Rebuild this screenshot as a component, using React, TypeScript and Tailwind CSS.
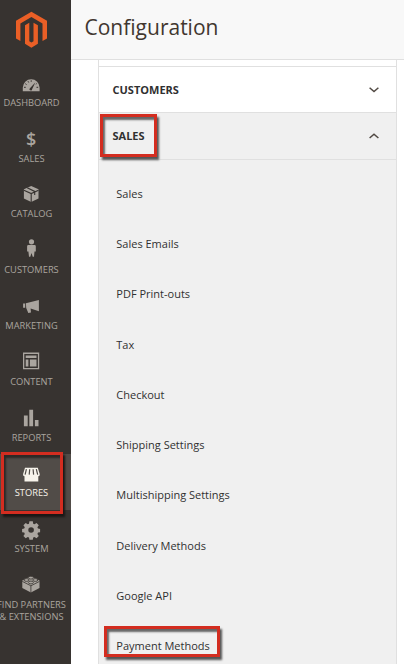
import type { ReactNode } from "react";

function Icon({ children }: { children: ReactNode }) {
  return (
    <svg width="24" height="24" viewBox="0 0 24 24" fill="currentColor" className="ml-[19px] block shrink-0">
      {children}
    </svg>
  );
}

const cut = "#373330";

const menu: { label: ReactNode; active?: boolean; icon: ReactNode }[] = [
  {
    label: "DASHBOARD",
    icon: (
      <Icon>
        <path d="M3.8 19.2v-3.6a8.4 8.4 0 0 1 16.8 0v3.6z" />
        <path d="M10.9 16.2 16.3 10.6 13.1 17.2a1.3 1.3 0 1 1-2.2-1z" fill={cut} />
        <path d="M5 15.3h1.8M6.3 11.7l1.3.9M9 9.2l.7 1.3M12.2 8.3v1.5M17.5 15.3h1.7M16.8 12.2l.9-.6" stroke={cut} strokeWidth="1" />
      </Icon>
    ),
  },
  {
    label: "SALES",
    icon: (
      <Icon>
        <text x="12.2" y="17.6" textAnchor="middle" className="font-['Open_Sans',sans-serif] text-[18px] font-semibold">$</text>
      </Icon>
    ),
  },
  {
    label: "CATALOG",
    icon: (
      <Icon>
        <path d="M12.2 3 19.5 6.2v9.3L12.2 19 4.9 15.5V6.2z" />
        <path d="M4.9 7.2 12.2 10.6 19.5 7.2M12.2 10.6V19M8.2 4.8l7.5 3.6v3.7" fill="none" stroke={cut} strokeWidth="1.1" />
      </Icon>
    ),
  },
  {
    label: "CUSTOMERS",
    icon: (
      <Icon>
        <circle cx="12.5" cy="2.8" r="2.6" />
        <path d="M9.3 6h6.4q1 0 1.1 1.2v5.3h-1.3l-.5 5.2h-1.3l-1.2-3.8-1.2 3.8H10L9.4 12.5H8.1V7.2Q8.2 6 9.3 6z" />
      </Icon>
    ),
  },
  {
    label: "MARKETING",
    icon: (
      <Icon>
        <path d="M4.1 8.5h2.1v4.2H4.1zM6.9 8.3 19.9 5v11.2l-8.3-2.8.4 4.2-2.7.4L7.2 13z" />
      </Icon>
    ),
  },
  {
    label: "CONTENT",
    icon: (
      <Icon>
        <path fillRule="evenodd" d="M4 1.6h16.2v16.7H4zM5.3 3v13.9h13.6V3z" />
        <path d="M6.7 4.5h10.8v2.6H6.7zM6.7 8.5h2.7v6.9H6.7zM10.9 8.5h6.6v6.9h-6.6z" />
      </Icon>
    ),
  },
  {
    label: "REPORTS",
    icon: (
      <Icon>
        <path d="M4.9 8.5h3.8v10.8H4.9zM10.3 2.7h3.8v16.6h-3.8zM15.9 12.9h3.6v6.4h-3.6z" />
      </Icon>
    ),
  },
  {
    label: "STORES",
    active: true,
    icon: (
      <Icon>
        <path d="M6 5.7h12.8l1.9 6.4v1.2q-.5.8-1.4.9v5.3H5.5v-5.3q-.9-.1-1.4-.9v-1.2z" />
        <path d="M7.4 7.2 6.1 12.6M10.7 7.2l-.5 5.4M14.1 7.2l.5 5.4M17.3 7.2l1.4 5.4" stroke="#514c48" strokeWidth="1.2" />
      </Icon>
    ),
  },
  {
    label: "SYSTEM",
    icon: (
      <Icon>
        <path
          fillRule="evenodd"
          d="M10.4 3.3h3.4l.4 2.4 1.3.6 2-1.4 2.3 2.3-1.4 2 .6 1.3 2.1.4v3.3l-2.1.4-.6 1.4 1.4 2-2.3 2.3-2-1.4-1.3.5-.4 2.4h-3.4l-.4-2.4-1.3-.5-2 1.4-2.3-2.3 1.4-2-.6-1.4-2.1-.4v-3.3l2.1-.4.6-1.3-1.4-2 2.3-2.3 2 1.4 1.3-.6zM12.1 9.2a2.8 2.8 0 1 0 0 5.6 2.8 2.8 0 0 0 0-5.6z"
        />
      </Icon>
    ),
  },
  {
    label: (
      <>
        FIND PARTNERS
        <br />
        &amp; EXTENSIONS
      </>
    ),
    icon: (
      <Icon>
        <path d="M11.9 2.2 20.5 6.4V14l-8.6 4.6L3.3 14V6.4z" />
        <path d="m3.3 7.4 8.6 4.4 8.6-4.4M11.9 11.8v7" fill="none" stroke={cut} strokeWidth=".8" />
        <g stroke={cut} strokeWidth=".8">
          <ellipse cx="11.9" cy="3.7" rx="2.5" ry="1.4" />
          <ellipse cx="7.5" cy="6" rx="2.5" ry="1.4" />
          <ellipse cx="16.3" cy="6" rx="2.5" ry="1.4" />
          <ellipse cx="11.9" cy="8.5" rx="2.5" ry="1.4" />
        </g>
      </Icon>
    ),
  },
];

const links = [
  "Sales",
  "Sales Emails",
  "PDF Print-outs",
  "Tax",
  "Checkout",
  "Shipping Settings",
  "Multishipping Settings",
  "Delivery Methods",
  "Google API",
  "Payment Methods",
];

function Chevron({ up = false }: { up?: boolean }) {
  return (
    <svg width="12" height="8" viewBox="0 0 12 8" fill="none" stroke="#514943" strokeWidth="1.5">
      <path d={up ? "M1.6 6 6 2.2 10.4 6" : "M1.6 1.7 6 5.5 10.4 1.7"} />
    </svg>
  );
}

function Sidebar() {
  return (
    <nav className="flex h-full w-[71px] shrink-0 flex-col overflow-hidden bg-[#373330]">
      <div className="h-[63.72px] shrink-0">
        <svg width="62" height="60" viewBox="0 0 62 60" fill="#ea5f26">
          <path d="M31.4 11.7 47 20.8v17.7L42.5 41V23.4l-11.1-6.5-11 6.5V41L16 38.5V20.8z" />
          <path d="m29.3 22.8-4.3 2.5v18.4l6.4 4 6.5-4V25.3l-4.4-2.5v18.4l-2.1 1.3-2.1-1.3z" />
        </svg>
      </div>
      {menu.map((item, i) => (
        <div
          key={i}
          className={`h-[55.8px] shrink-0 pt-2 ${item.active ? "bg-[#514c48] text-[#f7f3eb]" : "text-[#aaa59f]"}`}
        >
          <div className="flex w-[63px] flex-col gap-px">
            {item.icon}
            <span className="self-center whitespace-nowrap text-center text-[9.3px] leading-3">{item.label}</span>
          </div>
        </div>
      ))}
    </nav>
  );
}

export default function App() {
  return (
    <div className="relative flex h-[664px] w-[404px] overflow-hidden bg-white font-['Open_Sans',sans-serif]">
      <Sidebar />
      <main className="flex min-w-0 flex-1 flex-col">
        <header className="flex h-[60px] shrink-0 items-center border-b border-[#e0e0e0] bg-[#f8f8f8] pb-1.5 pl-[13.5px]">
          <h1 className="text-[21px] leading-7 text-[#41362f]">Configuration</h1>
        </header>
        <section className="ml-[27px] flex w-[299px] flex-1 flex-col border-x border-[#e0e0e0] text-[#303030]">
          <div className="h-[7px] shrink-0 border-b border-[#e0e0e0]" />
          <div className="flex h-[46px] shrink-0 items-center justify-between border-b border-[#e0e0e0] pl-[13.5px] pr-4">
            <span className="pt-px text-[11px] font-bold">CUSTOMERS</span>
            <Chevron />
          </div>
          <div className="flex h-[47px] shrink-0 items-center justify-between border-b border-[#e0e0e0] bg-[#f0f0f0] pl-[13.5px] pr-4">
            <span className="text-[11px] font-bold">SALES</span>
            <Chevron up />
          </div>
          <ul className="flex h-[504px] shrink-0 flex-col bg-[#f0f0f0] pt-[9px]">
            {links.map((link) => (
              <li key={link} className="flex h-[50.25px] shrink-0 items-center pl-[17.3px] text-[11px]">
                {link}
              </li>
            ))}
          </ul>
        </section>
      </main>
      <div className="absolute left-[100px] top-[114px] h-[43px] w-[57px] border-3 border-[#d32d20] shadow-[2px_3px_2px_#555,inset_2px_3px_2px_#666]" />
      <div className="absolute left-[1px] top-[452px] h-[62px] w-[62px] border-3 border-[#d32d20] shadow-[2px_3px_2px_#1b1715,inset_2px_3px_2px_#2d2926]" />
      <div className="absolute left-[104px] top-[626px] h-[31px] w-[116px] border-3 border-[#d32d20] shadow-[2px_3px_2px_#555,inset_2px_3px_2px_#666]" />
    </div>
  );
}
